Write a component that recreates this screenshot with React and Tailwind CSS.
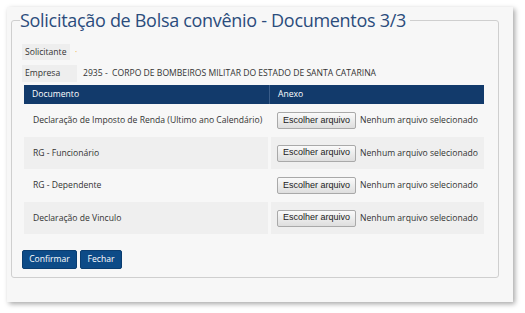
export default function App() {
  const rows = [
    { doc: "Declaração de Imposto de Renda (Ultimo ano Calendário)", h: "h-[33px]", alt: false },
    { doc: "RG - Funcionário", h: "h-[32px]", alt: true },
    { doc: "RG - Dependente", h: "h-[33px]", alt: false },
    { doc: "Declaração de Vinculo", h: "h-[32px]", alt: true },
  ];
  return (
    <div className="w-[525px] h-[313px] bg-white pt-[7px] pl-[7px] font-['Open_Sans',sans-serif] whitespace-nowrap">
      <div className="w-[506px] h-[295px] bg-[#f7f7f7] shadow-[2px_2px_5px_rgba(0,0,0,0.35)] pl-[4px] pr-[14px]">
        <fieldset className="border border-[#cfcfcf] rounded-[3px] h-[271px] pl-[10px] pr-[14px]">
          <legend className="ml-[-2px] pl-0 pr-[4px] text-[18px] leading-[26px] text-[#2b4c7c] tracking-[-0.3px]">
            Solicitação de Bolsa convênio - Documentos 3/3
          </legend>
          <div className="mt-[11px] flex flex-col gap-[5px] text-[8.6px] text-[#333]">
            <div className="flex items-center">
              <div className="w-[48px] h-[16px] bg-[#eeeeee] pl-[3px] flex items-center">Solicitante</div>
              <span className="ml-[5px] text-[#f0b040]">·</span>
            </div>
            <div className="flex items-center">
              <div className="w-[55px] h-[17px] bg-[#eeeeee] pl-[3px] flex items-center">Empresa</div>
              <span className="ml-[6px] whitespace-pre">2935 -  CORPO DE BOMBEIROS MILITAR DO ESTADO DE SANTA CATARINA</span>
            </div>
          </div>
          <div className="mt-[3px] ml-[2px] w-[460px] text-[8.6px] text-[#333]">
            <div className="grid grid-cols-[245px_1fr] h-[19px] bg-[#123a6b] text-white">
              <div className="pl-[8px] flex items-center">Documento</div>
              <div className="pl-[8px] flex items-center border-l border-[#3a5d8a]">Anexo</div>
            </div>
            {rows.map((r, i) => (
              <div key={i} className={`grid grid-cols-[244px_1fr] gap-x-[3px] ${r.h}`}>
                <div className={`pl-[9px] flex items-center ${r.alt ? "bg-[#efefef]" : ""}`}>{r.doc}</div>
                <div className={`pl-[6px] flex items-center ${r.alt ? "bg-[#efefef]" : ""}`}>
                  <span className="h-[17px] px-[5px] flex items-center border border-[#a9a9a9] rounded-[2px] bg-gradient-to-b from-[#fafafa] to-[#dedede] text-[9px] text-[#222] font-['Liberation_Sans',sans-serif]">
                    Escolher arquivo
                  </span>
                  <span className="ml-[4px]">Nenhum arquivo selecionado</span>
                </div>
              </div>
            ))}
          </div>
          <div className="mt-[16px] flex gap-[3px] text-[8.6px] text-white">
            <div className="w-[55px] h-[19px] bg-[#0d4b87] rounded-[2px] border border-[#0a3d70] flex items-center justify-center">Confirmar</div>
            <div className="w-[42px] h-[19px] bg-[#0d4b87] rounded-[2px] border border-[#0a3d70] flex items-center justify-center">Fechar</div>
          </div>
        </fieldset>
      </div>
    </div>
  );
}
